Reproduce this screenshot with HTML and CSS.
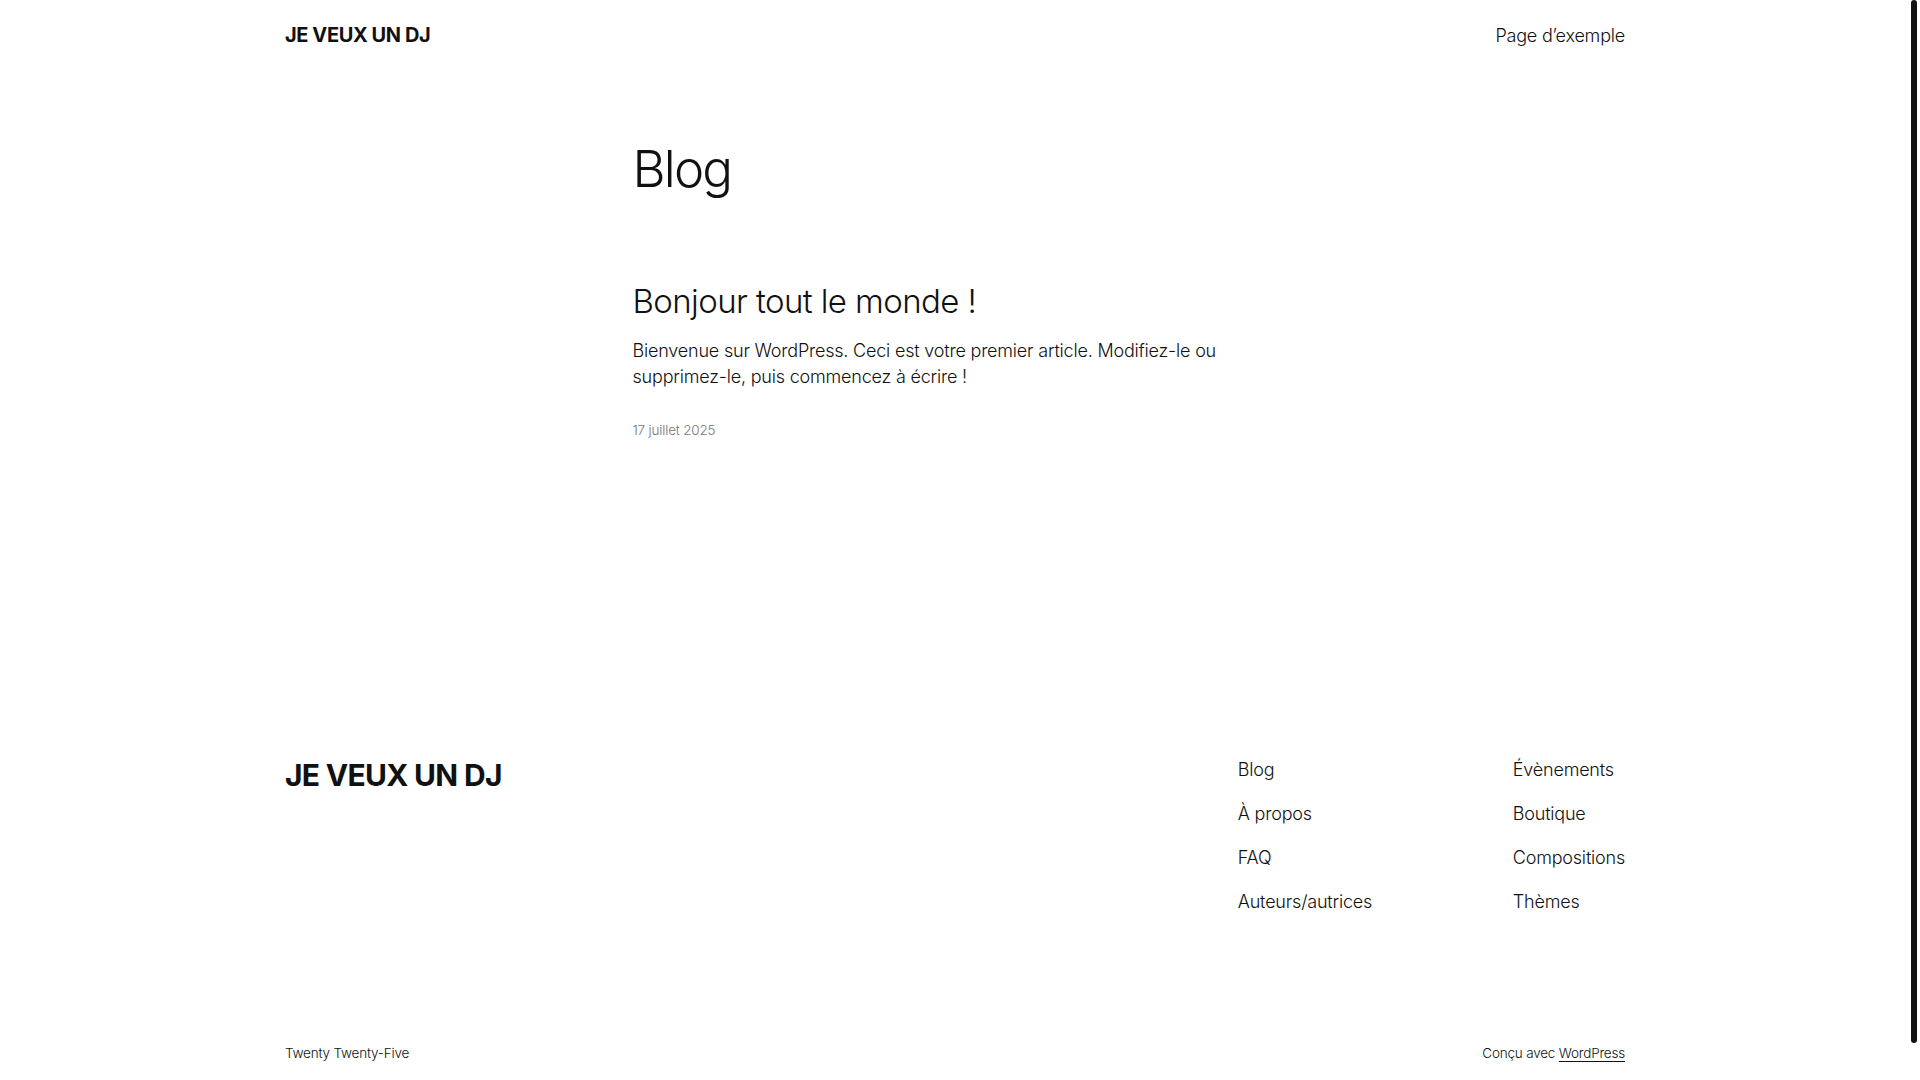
FILE: index.html
```html
<!DOCTYPE html>
<html lang="fr">
<head>
	<meta charset="UTF-8">
	<title>Blog – JE VEUX UN DJ</title>
	<link rel="stylesheet" href="styles.css">
</head>
<body>
	<header class="entete">
		<a href="#" class="titreSite">JE VEUX UN DJ</a>
		<nav class="menuHaut">
			<a href="#">Page d’exemple</a>
		</nav>
	</header>

	<main class="contenu">
		<h1 class="titrePage">Blog</h1>

		<article class="article">
			<h2 class="titreArticle"><a href="#">Bonjour tout le monde !</a></h2>
			<p class="extrait">Bienvenue sur WordPress. Ceci est votre premier article. Modifiez-le ou supprimez-le, puis commencez à écrire !</p>
			<p class="date">17 juillet 2025</p>
		</article>
	</main>

	<footer class="pied">
		<div class="piedHaut">
			<a href="#" class="titrePied">JE VEUX UN DJ</a>
			<div class="menusPied">
				<ul class="colonne colonneGauche">
					<li><a href="#">Blog</a></li>
					<li><a href="#">À propos</a></li>
					<li><a href="#">FAQ</a></li>
					<li><a href="#">Auteurs/autrices</a></li>
				</ul>
				<ul class="colonne">
					<li><a href="#">Évènements</a></li>
					<li><a href="#">Boutique</a></li>
					<li><a href="#">Compositions</a></li>
					<li><a href="#">Thèmes</a></li>
				</ul>
			</div>
		</div>
		<div class="piedBas">
			<span>Twenty Twenty-Five</span>
			<span>Conçu avec <a href="#" class="lienWp">WordPress</a></span>
		</div>
	</footer>

	<div class="barreDefilement"></div>
</body>
</html>
```

FILE: styles.css
```css
html{
	background: #fff;
}

body{
	margin: 0;
	padding-right: 10px;
	font-family: "Inter", "Liberation Sans", sans-serif;
	font-weight: 300;
	font-size: 18px;
	color: #111;
	background: #fff;
}

a{
	color: inherit;
	text-decoration: none;
}

/* curseur de la barre de defilement */
.barreDefilement{
	position: fixed;
	top: 0;
	right: 3px;
	width: 6px;
	height: 1043px;
	border-radius: 3px;
	background: #111;
}

.entete{
	max-width: 1340px;
	height: 70px;
	margin: 0 auto;
	display: flex;
	justify-content: space-between;
	align-items: center;
}

.titreSite{
	font-weight: 700;
	font-size: 20px;
	letter-spacing: -0.4px;
}

.menuHaut a{
	font-size: 18px;
	letter-spacing: -0.2px;
}

.contenu{
	max-width: 645px;
	margin: 0 auto;
	padding-top: 68px;
	min-height: 619px;
	box-sizing: border-box;
}

.titrePage{
	margin: 0;
	font-size: 51px;
	font-weight: 300;
	line-height: 1.2;
	letter-spacing: -1.8px;
}

.article{
	margin-top: 83px;
}

.titreArticle{
	margin: 0;
	font-size: 33px;
	font-weight: 300;
	line-height: 1.2;
	letter-spacing: -0.6px;
}

.extrait{
	margin: 16px 0 0;
	line-height: 1.45;
	letter-spacing: -0.2px;
}

.date{
	margin: 32px 0 0;
	font-size: 13.5px;
	color: #777;
	letter-spacing: -0.2px;
}

.pied{
	max-width: 1340px;
	margin: 0 auto;
	padding-top: 68px;
	padding-bottom: 54px;
}

.piedHaut{
	display: flex;
	justify-content: space-between;
	align-items: flex-start;
}

.titrePied{
	font-weight: 700;
	font-size: 30px;
	line-height: 1.2;
	letter-spacing: -0.7px;
}

.menusPied{
	display: flex;
}

.colonne{
	list-style: none;
	margin: 0;
	padding: 0;
	display: flex;
	flex-direction: column;
	gap: 19px;
}

.colonne li{
	line-height: 25px;
	letter-spacing: -0.2px;
}

.colonneGauche{
	width: 275px;
}

.piedBas{
	margin-top: 131px;
	display: flex;
	justify-content: space-between;
	font-size: 13.5px;
	letter-spacing: -0.2px;
}

.lienWp{
	text-decoration: underline;
	text-underline-offset: 3px;
}
```
